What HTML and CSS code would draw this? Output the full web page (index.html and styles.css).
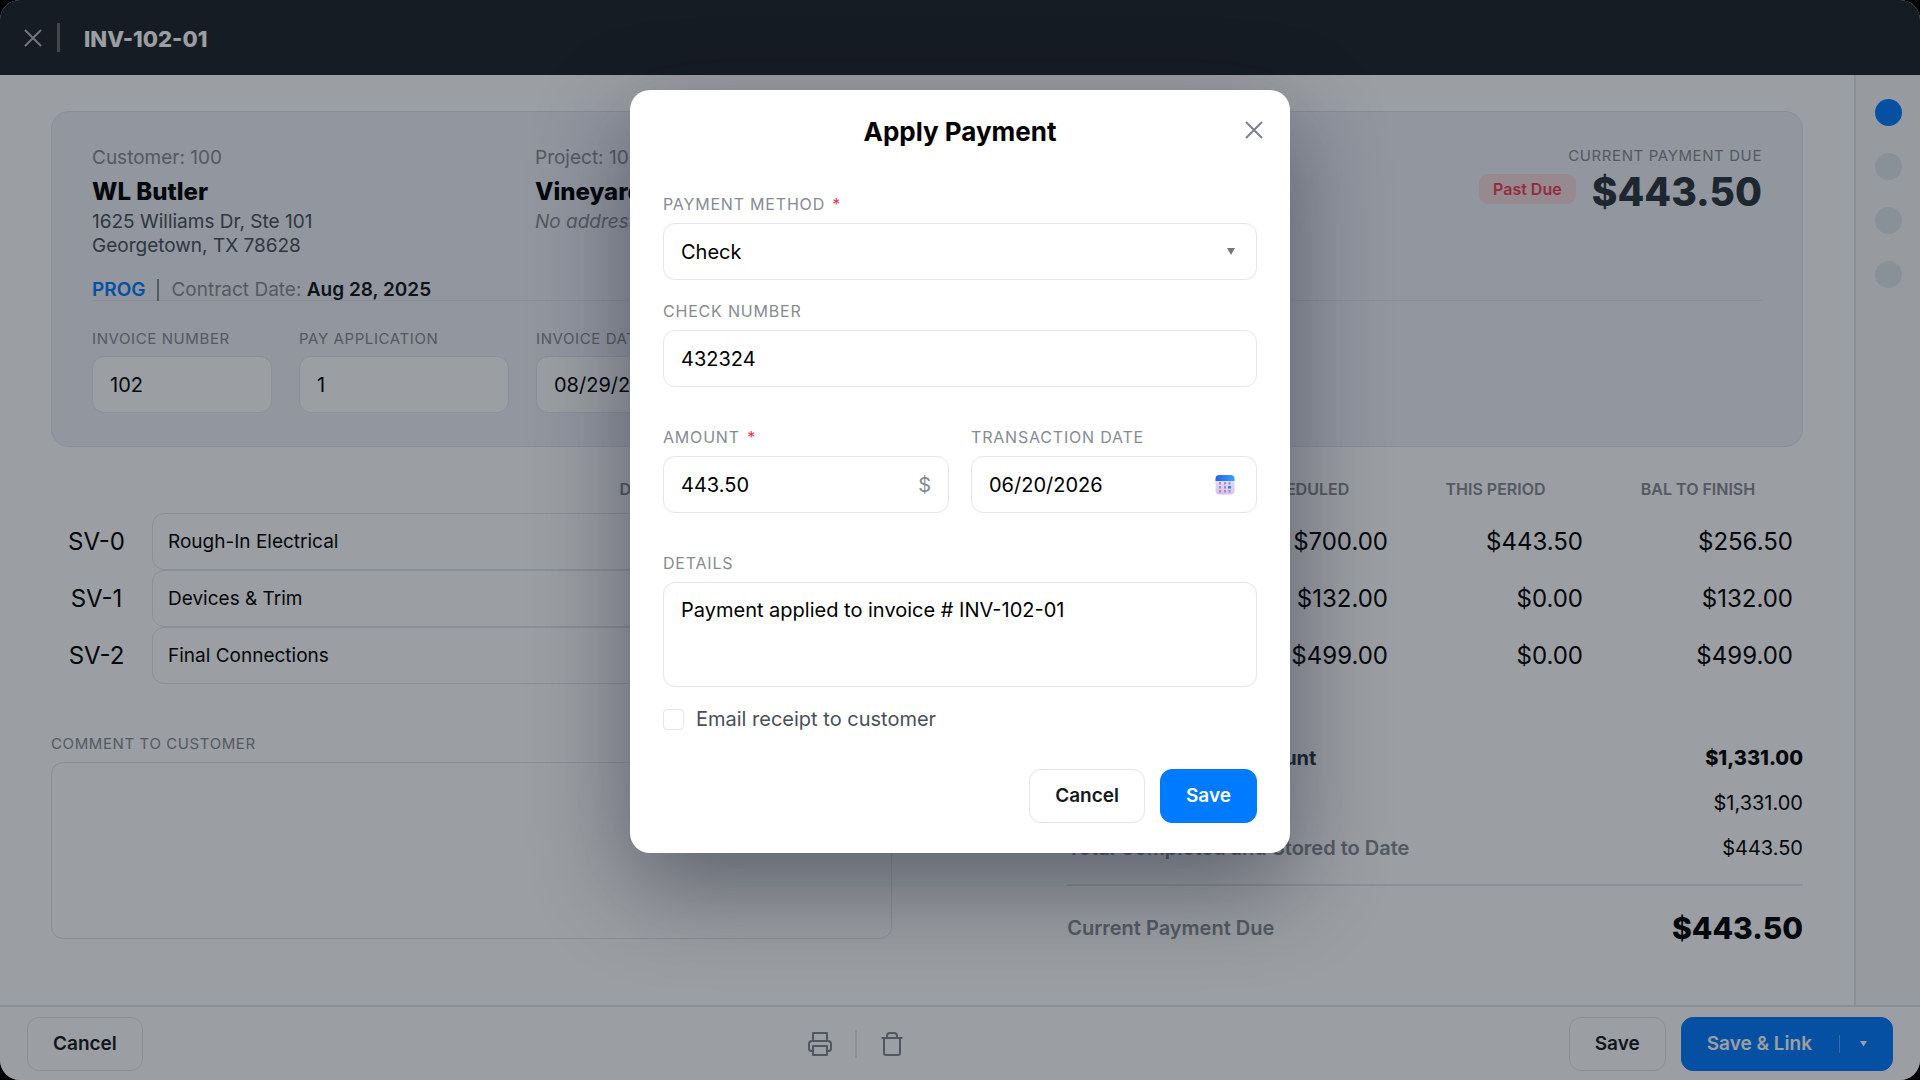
FILE: index.html
```html
<!DOCTYPE html>
<html lang="en">
<head>
<meta charset="utf-8">
<meta name="viewport" content="width=device-width, initial-scale=1">
<title>INV-102-01</title>
<link rel="stylesheet" href="styles.css">
</head>
<body>
<div class="app">
  <header class="topbar">
    <button class="icon-btn" type="button" aria-label="Close invoice">
      <svg width="18" height="18" viewBox="0 0 18 18" fill="none" stroke="currentColor" stroke-width="2" stroke-linecap="round"><path d="M1.500 1.500l15 15M16.500 1.500l-15 15"/></svg>
    </button>
    <span class="topbar-rule"></span>
    <h1 class="topbar-title">INV-102-01</h1>
  </header>

  <div class="body">
    <main class="content">
      <section class="card">
        <div class="card-top">
          <div class="party">
            <span class="muted">Customer: 100</span>
            <strong class="party-name">WL Butler</strong>
            <span class="address">1625 Williams Dr, Ste 101<br>Georgetown, TX 78628</span>
            <div class="contract">
              <span class="prog">PROG</span>
              <span class="contract-rule"></span>
              <span class="muted">Contract Date: <b class="contract-date">Aug 28, 2025</b></span>
            </div>
          </div>
          <div class="party">
            <span class="muted">Project: 105</span>
            <strong class="party-name">Vineyard</strong>
            <em class="muted">No address</em>
          </div>
          <div class="due">
            <span class="label small">Current Payment Due</span>
            <div class="due-row">
              <span class="badge">Past Due</span>
              <strong class="due-amount">$443.50</strong>
            </div>
          </div>
        </div>
        <div class="card-fields">
          <div class="field"><label class="label small" for="inv">Invoice Number</label><input class="input" id="inv" type="text" value="102"></div>
          <div class="field"><label class="label small" for="app">Pay Application</label><input class="input" id="app" type="text" value="1"></div>
          <div class="field"><label class="label small" for="idate">Invoice Date</label><input class="input" id="idate" type="text" value="08/29/2025"></div>
        </div>
      </section>

      <table class="lines">
        <colgroup><col class="col-no"><col><col class="col-num"><col class="col-num"><col class="col-bal"></colgroup>
        <thead>
          <tr><th></th><th>Description</th><th>Scheduled</th><th>This Period</th><th>Bal to Finish</th></tr>
        </thead>
        <tbody>
          <tr><td class="no">SV-0</td><td class="desc"><input class="input" type="text" aria-label="Description SV-0" value="Rough-In Electrical"></td><td class="num">$700.00</td><td class="num">$443.50</td><td class="num">$256.50</td></tr>
          <tr><td class="no">SV-1</td><td class="desc"><input class="input" type="text" aria-label="Description SV-1" value="Devices &amp; Trim"></td><td class="num">$132.00</td><td class="num">$0.00</td><td class="num">$132.00</td></tr>
          <tr><td class="no">SV-2</td><td class="desc"><input class="input" type="text" aria-label="Description SV-2" value="Final Connections"></td><td class="num">$499.00</td><td class="num">$0.00</td><td class="num">$499.00</td></tr>
        </tbody>
      </table>

      <div class="summary">
        <div class="comment">
          <label class="label small" for="comment">Comment to Customer</label>
          <textarea class="input comment-box" id="comment"></textarea>
        </div>
        <dl class="totals">
          <div class="total strong"><dt>Original Contract Amount</dt><dd>$1,331.00</dd></div>
          <div class="total"><dt>Contract to Date</dt><dd>$1,331.00</dd></div>
          <div class="total"><dt>Total Completed and Stored to Date</dt><dd>$443.50</dd></div>
          <div class="total final"><dt>Current Payment Due</dt><dd>$443.50</dd></div>
        </dl>
      </div>
    </main>
    <nav class="rail" aria-label="Steps">
      <a class="dot active" href="#step-1" aria-label="Step 1"></a>
      <a class="dot" href="#step-2" aria-label="Step 2"></a>
      <a class="dot" href="#step-3" aria-label="Step 3"></a>
      <a class="dot" href="#step-4" aria-label="Step 4"></a>
    </nav>
  </div>

  <footer class="footer">
    <button class="btn" type="button">Cancel</button>
    <div class="footer-tools">
      <button class="tool" type="button" aria-label="Print">
        <svg width="24" height="26" viewBox="0 0 24 26" fill="none" stroke="currentColor" stroke-width="2" stroke-linejoin="round"><path d="M5 10V2h14v8M5 20H3.500A2.500 2.500 0 0 1 1 17.500V13a3 3 0 0 1 3-3h16a3 3 0 0 1 3 3v4.500a2.500 2.500 0 0 1-2.500 2.500H19"/><path d="M5 15h14v9H5z"/></svg>
      </button>
      <span class="tool-rule"></span>
      <button class="tool" type="button" aria-label="Delete">
        <svg width="24" height="26" viewBox="0 0 24 26" fill="none" stroke="currentColor" stroke-width="2" stroke-linejoin="round"><path d="M1.500 7h21M7 7V5a3 3 0 0 1 3-3h4a3 3 0 0 1 3 3v2M4 7v15a2 2 0 0 0 2 2h12a2 2 0 0 0 2-2V7"/></svg>
      </button>
    </div>
    <div class="footer-right">
      <button class="btn" type="button">Save</button>
      <button class="btn primary split" type="button">Save &amp; Link<span class="split-rule"></span><svg width="7" height="6" viewBox="0 0 7 6" fill="currentColor"><path d="M0 0h7L3.500 5.500z"/></svg></button>
    </div>
  </footer>

  <div class="overlay">
    <form class="modal" role="dialog" aria-labelledby="modal-title">
      <div class="modal-head">
        <h2 class="modal-title" id="modal-title">Apply Payment</h2>
        <button class="icon-btn modal-close" type="button" aria-label="Close">
          <svg width="18" height="18" viewBox="0 0 18 18" fill="none" stroke="currentColor" stroke-width="2"><path d="M1 1l16 16M17 1L1 17"/></svg>
        </button>
      </div>
      <div class="field">
        <label class="label" for="method">Payment Method <span class="req">*</span></label>
        <div class="control">
          <select class="control-input" id="method"><option>Check</option></select>
          <svg class="caret" width="8" height="7" viewBox="0 0 8 7" fill="currentColor"><path d="M0 0h8L4 7z"/></svg>
        </div>
      </div>
      <div class="field">
        <label class="label" for="check">Check Number</label>
        <input class="input" id="check" type="text" value="432324">
      </div>
      <div class="field-row">
        <div class="field">
          <label class="label" for="amount">Amount <span class="req">*</span></label>
          <div class="control"><input class="control-input" id="amount" type="text" value="443.50"><span class="unit">$</span></div>
        </div>
        <div class="field">
          <label class="label" for="tdate">Transaction Date</label>
          <div class="control">
            <input class="control-input" id="tdate" type="text" value="06/20/2026">
            <svg class="calendar" width="20" height="20" viewBox="0 0 20 20">
              <defs>
                <linearGradient id="cal-top" x1="0" x2="1"><stop offset="0" stop-color="#2563eb"/><stop offset="1" stop-color="#38a0ff"/></linearGradient>
                <linearGradient id="cal-body" x1="0" y1="0" x2="0" y2="1"><stop offset="0" stop-color="#efe6fa"/><stop offset="1" stop-color="#d9bdf3"/></linearGradient>
              </defs>
              <rect x="0.500" y="0.500" width="19" height="19" rx="4" fill="url(#cal-body)"/>
              <path d="M.5 6V4a4 4 0 0 1 4-4h11a4 4 0 0 1 4 4v2z" fill="url(#cal-top)"/>
              <g fill="#9f94ae"><path d="M4 7h2v2.500H4zM9 7h2v2.500H9zM13.500 7h2v2.500h-2zM4 11h2v2.500H4zM9 11h2v2.500H9zM4 15h2v2.500H4zM9 15h2v2.500H9zM13.500 15h2v2.500h-2z"/></g>
              <path d="M13 11h3v2.500h-3z" fill="#1e88f5"/>
            </svg>
          </div>
        </div>
      </div>
      <div class="field">
        <label class="label" for="details">Details</label>
        <textarea class="input details" id="details">Payment applied to invoice # INV-102-01</textarea>
      </div>
      <div class="check"><input class="checkbox" type="checkbox" id="email"><label for="email">Email receipt to customer</label></div>
      <div class="actions">
        <button class="btn" type="button">Cancel</button>
        <button class="btn primary" type="submit">Save</button>
      </div>
    </form>
  </div>
</div>
</body>
</html>
```
FILE: styles.css
```css
*, *::before, *::after { box-sizing: border-box; }

:root {
  --ink: #000;
  --muted: #868b92;
  --line: #e4e5ea;
  --blue: #007bff;
}

body {
  margin: 0;
  background: #000;
  color: var(--ink);
  font: 400 20px/24px Inter, "Liberation Sans", sans-serif;
}

button, input, select, textarea { font: inherit; color: inherit; }
h1, h2, dl, dd { margin: 0; }

.app {
  position: relative;
  display: flex;
  flex-direction: column;
  min-height: 100vh;
  overflow: hidden;
  border-radius: 20px;
  background: #fff;
}

/* Header */
.topbar {
  display: flex;
  align-items: center;
  height: 75px;
  padding: 0 24px;
  background: #1e2227;
  color: #fff;
}
.icon-btn {
  display: flex;
  padding: 0;
  border: 0;
  background: none;
  color: #b8bbc0;
}
.topbar-rule { width: 3px; height: 29px; margin: 0 24px 0 15px; background: #696b6f; }
.topbar-title { padding-top: 2px; font-size: 22px; font-weight: 800; }

/* Page body */
.body { display: flex; flex: 1; }
.content { flex: 1; padding: 36px 51px 24px; }
.rail {
  display: flex;
  flex-direction: column;
  align-items: center;
  gap: 27px;
  width: 66px;
  padding-top: 24px;
  border-left: 2px solid var(--line);
  background: #f8f9fa;
}
.dot { width: 27px; height: 27px; border-radius: 50%; background: #e1e8ef; }
.dot.active { background: var(--blue); }

.card {
  height: 336px;
  padding: 34px 40px;
  border: 1px solid #dfe4ee;
  border-radius: 18px;
  background: #eef2fa;
}
.card-top { display: flex; height: 155px; border-bottom: 1px solid #dfe4ee; }
.party { display: flex; flex-direction: column; width: 443px; white-space: nowrap; }
.muted { color: var(--muted); font-size: 19px; }
.party-name { margin: 8px 0 4px; font-size: 24px; font-weight: 800; line-height: 28px; }
.address { color: #495059; font-size: 19px; }
.contract { display: flex; align-items: center; gap: 12px; margin-top: 20px; }
.prog { color: var(--blue); font-size: 19px; font-weight: 600; }
.contract-rule { width: 2px; height: 22px; background: var(--muted); }
.contract-date { color: #101318; font-weight: 600; }

.due { display: flex; flex-direction: column; align-items: flex-end; margin-left: auto; }
.due .label { line-height: 20px; }
.due-row { display: flex; align-items: flex-start; gap: 16px; margin-top: 8px; }
.badge {
  padding: 3px 14px;
  border-radius: 9px;
  background: #f8dbe0;
  color: #ee3f57;
  font-size: 16px;
  font-weight: 600;
}
.due-amount { color: #2b333e; font-size: 39px; font-weight: 800; line-height: 36px; }

.card-fields { display: grid; grid-template-columns: 180px 210px 210px; gap: 27px; padding-top: 26px; }

/* Form parts */
.label {
  color: var(--muted);
  font-size: 16px;
  letter-spacing: 0.05em;
  line-height: 24px;
  text-transform: uppercase;
  white-space: nowrap;
}
.label.small { font-size: 15px; letter-spacing: 0.04em; }
.req { margin-left: 2px; color: #e8364f; }
.field { display: flex; flex-direction: column; gap: 5px; min-width: 0; }
.input, .control {
  width: 100%;
  height: 57px;
  border: 1px solid var(--line);
  border-radius: 12px;
  background: #fff;
}
.input { padding: 0 17px; }
.control { display: flex; align-items: center; padding: 0 17px; }
.control-input { flex: 1; min-width: 0; padding: 0; border: 0; outline: 0; background: none; appearance: none; }

/* Line items */
.lines { width: 100%; margin-top: 26px; border-collapse: collapse; table-layout: fixed; }
.col-no { width: 93px; }
.col-num { width: 195px; }
.col-bal { width: 210px; }
.lines th {
  height: 40px;
  padding: 0 0 8px;
  color: var(--muted);
  font-size: 16px;
  font-weight: 600;
  text-transform: uppercase;
}
.lines td { height: 57px; padding: 0; font-size: 24px; }
.lines .no { padding-right: 2px; text-align: center; }
.lines .desc { padding: 0 8px; }
.lines .desc .input { display: block; padding: 0 15px; font-size: 19px; }
.lines .num { padding-right: 10px; text-align: right; }

/* Comment and totals */
.summary { display: grid; grid-template-columns: 48% 42%; justify-content: space-between; margin-top: 48px; }
.comment { display: flex; flex-direction: column; gap: 6px; }
.comment-box { height: 177px; resize: none; }
.total { display: flex; align-items: center; justify-content: space-between; height: 45px; }
.totals { padding-top: 3px; }
.total dt { color: var(--muted); font-weight: 600; }
.total.strong { font-weight: 800; }
.total.strong dt { color: #2b333e; font-weight: 700; }
.total.final { height: 86px; margin-top: 14px; border-top: 2px solid var(--line); }
.total.final dd { font-size: 30px; font-weight: 800; }

/* Footer */
.footer {
  display: flex;
  align-items: center;
  justify-content: space-between;
  height: 75px;
  padding: 0 27px;
  border-top: 2px solid var(--line);
}
.footer-tools { display: flex; align-items: center; gap: 23px; }
.tool { display: flex; padding: 0; border: 0; background: none; color: #82868f; }
.tool-rule { width: 2px; height: 28px; background: var(--line); }
.footer-right { display: flex; gap: 15px; }
.btn {
  height: 54px;
  padding: 0 25px;
  border: 1px solid var(--line);
  border-radius: 12px;
  background: #fff;
  color: #16191d;
  font-size: 19px;
  font-weight: 600;
}
.btn.primary { border-color: var(--blue); background: var(--blue); color: #fff; }
.split { display: flex; align-items: center; }
.split-rule { width: 1px; height: 18px; margin: 0 20px 0 27px; background: #5aa9ff; }

/* Payment dialog */
.overlay {
  position: absolute;
  inset: 0;
  display: flex;
  align-items: flex-start;
  justify-content: center;
  padding-top: 90px;
  background: rgb(13 20 30 / 41%);
}
.modal {
  display: flex;
  flex-direction: column;
  width: 660px;
  padding: 26px 33px 30px;
  border-radius: 20px;
  background: #fff;
  box-shadow: 0 32px 96px rgb(15 23 42 / 45%);
}
.modal-head { position: relative; margin-bottom: 44px; }
.modal-title { font-size: 26px; font-weight: 700; line-height: 32px; text-align: center; }
.modal-close { position: absolute; top: 5px; right: -6px; color: #7d8289; }
.modal .field { gap: 7px; }
.modal .field + .field { margin-top: 19px; }
.field-row { display: grid; grid-template-columns: 1fr 1fr; gap: 22px; margin: 38px 0; }
.modal .field-row .field + .field { margin-top: 0; }
.caret { margin-right: 4px; color: #74787e; }
.unit { color: var(--muted); }
.calendar { margin-right: 4px; }
.details { height: 105px; padding: 15px 17px; resize: none; }
.check { display: flex; align-items: center; gap: 12px; margin: 20px 0 38px; color: #495059; }
.checkbox { width: 21px; height: 21px; margin: 0; border: 1px solid var(--line); border-radius: 4px; appearance: none; }
.actions { display: flex; justify-content: flex-end; gap: 15px; }
```
